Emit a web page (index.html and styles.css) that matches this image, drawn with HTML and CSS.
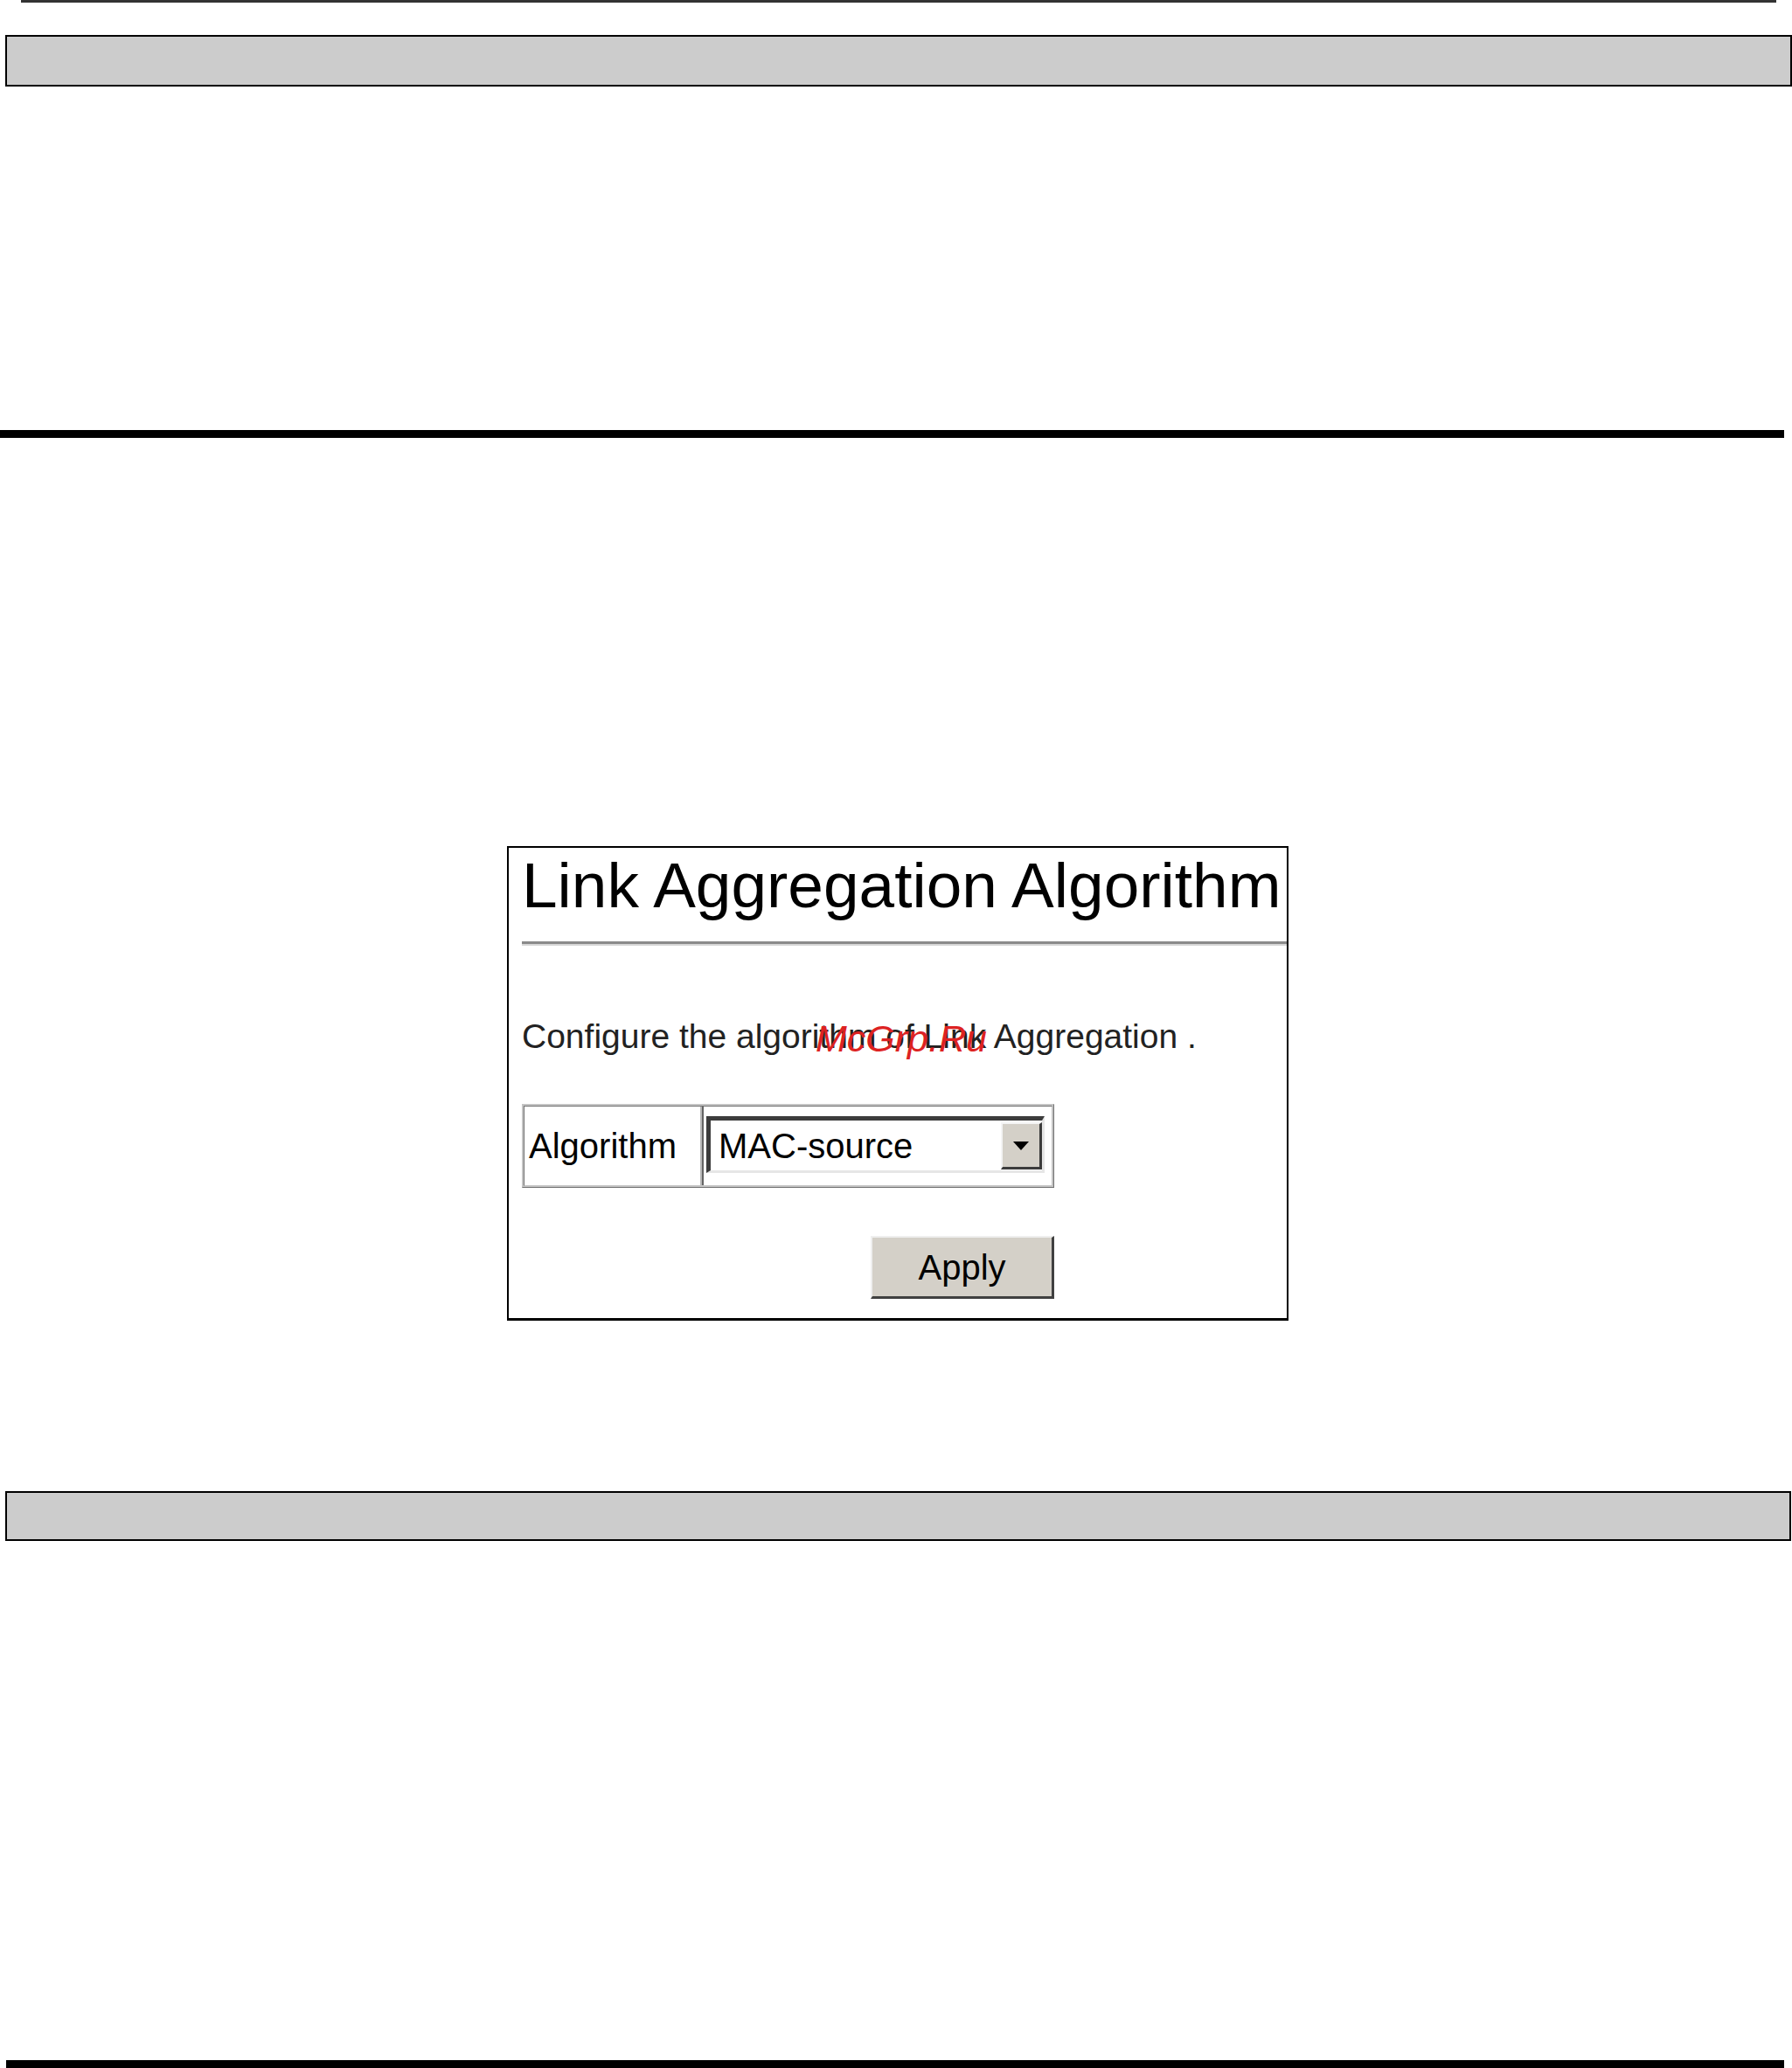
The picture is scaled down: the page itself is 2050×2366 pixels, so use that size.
FILE: index.html
```html
<!DOCTYPE html>
<html lang="en">
<head>
<meta charset="utf-8">
<title>Link Aggregation Algorithm</title>
<link rel="stylesheet" href="styles.css">
</head>
<body>
  <div class="page">
    <div class="top-rule"></div>
    <div class="band"></div>
    <div class="thick-rule"></div>

    <div class="shot">
      <h1 class="shot-title">Link Aggregation Algorithm</h1>
      <div class="shot-rule"></div>
      <p class="shot-desc">Configure the algorithm of Link Aggregation .</p>
      <span class="watermark">McGrp.Ru</span>

      <div class="algo-table">
        <div class="cell cell-label"><span class="form-text">Algorithm</span></div>
        <div class="cell cell-field">
          <div class="select">
            <span class="form-text">MAC-source</span>
            <span class="drop-btn"><span class="drop-arrow"></span></span>
          </div>
        </div>
      </div>

      <button class="apply" type="button"><span class="form-text">Apply</span></button>
    </div>

    <div class="band band-lower"></div>
    <div class="thick-rule thick-rule-bottom"></div>
  </div>
</body>
</html>
```

FILE: styles.css
```css
html, body {
  margin: 0;
  padding: 0;
  background: #ffffff;
}

body {
  font-family: "Liberation Sans", Arial, sans-serif;
  color: #000;
}

.page {
  width: 2050px;
  height: 2366px;
  overflow: hidden;
}

/* page header hairline */
.top-rule {
  height: 3px;
  width: 2008px;
  margin-left: 24px;
  background: #333333;
}

/* grey section bands */
.band {
  box-sizing: border-box;
  margin-top: 37px;
  margin-left: 6px;
  width: 2044px;
  height: 59px;
  border: 2px solid #000;
  background: #cccccc;
}

.band-lower {
  margin-top: 195px;
  width: 2043px;
  height: 57px;
}

.thick-rule {
  margin-top: 393px;
  width: 2041px;
  height: 9px;
  background: #000;
}

.thick-rule-bottom {
  margin-top: 594px;
  margin-left: 7px;
  width: 2034px;
}

/* captured configuration window */
.shot {
  position: relative;
  box-sizing: border-box;
  margin-top: 467px;
  margin-left: 580px;
  width: 894px;
  border: 2px solid #000;
  border-bottom-width: 3px;
  padding: 7px 0 22px 0;
  background: #fff;
}

.shot-title {
  margin: 0 0 0 15px;
  font-weight: normal;
  font-size: 73px;
  line-height: 72px;
  white-space: nowrap;
  color: #000;
}

.shot-rule {
  margin: 28px 0 0 15px;
  height: 0;
  border-top: 3px solid #8a8a8a;
  border-bottom: 2px solid #d6d6d6;
}

.shot-desc {
  margin: 84px 0 0 15px;
  font-size: 39px;
  line-height: 39px;
  color: #222;
  white-space: nowrap;
}

.watermark {
  position: absolute;
  left: 351px;
  top: 197px;
  font-size: 43px;
  line-height: 43px;
  font-style: italic;
  color: #dd2222;
  white-space: nowrap;
}

/* form control text */
.form-text {
  display: inline-block;
  font-size: 40px;
  line-height: 40px;
  white-space: nowrap;
  color: #000;
}

.algo-table {
  display: flex;
  box-sizing: border-box;
  margin: 58px 0 0 15px;
  width: 609px;
  height: 96px;
  border: 3px ridge #c4c4c4;
}

.cell {
  display: flex;
  align-items: center;
  box-sizing: border-box;
}

.cell-label {
  width: 205px;
  padding-left: 5px;
  border-right: 4px ridge #b8b8b8;
}

.cell-field {
  flex: 1;
  align-items: flex-start;
}

.select {
  display: flex;
  align-items: center;
  box-sizing: border-box;
  margin: 11px 0 0 3px;
  width: 387px;
  height: 65px;
  padding-left: 9px;
  border-style: solid;
  border-width: 5px 3px 3px 5px;
  border-color: #3c3c3c #e6e6e6 #e6e6e6 #3c3c3c;
  background: #fff;
}

.drop-btn {
  display: flex;
  align-items: center;
  justify-content: center;
  box-sizing: border-box;
  margin: 2px 0 1px auto;
  align-self: stretch;
  width: 47px;
  border-style: solid;
  border-width: 2px 3px 3px 2px;
  border-color: #f4f4f4 #3c3c3c #3c3c3c #f4f4f4;
  background: #d4d0c8;
}

.drop-arrow {
  width: 0;
  height: 0;
  border-left: 9px solid transparent;
  border-right: 9px solid transparent;
  border-top: 10px solid #000;
}

.apply {
  display: flex;
  align-items: center;
  justify-content: center;
  box-sizing: border-box;
  margin: 55px 0 0 414px;
  width: 210px;
  height: 72px;
  padding: 0;
  border-style: solid;
  border-width: 2px 3px 3px 2px;
  border-color: #efefef #404040 #404040 #efefef;
  background: #d4d0c8;
  font-family: "Liberation Sans", Arial, sans-serif;
}
```
